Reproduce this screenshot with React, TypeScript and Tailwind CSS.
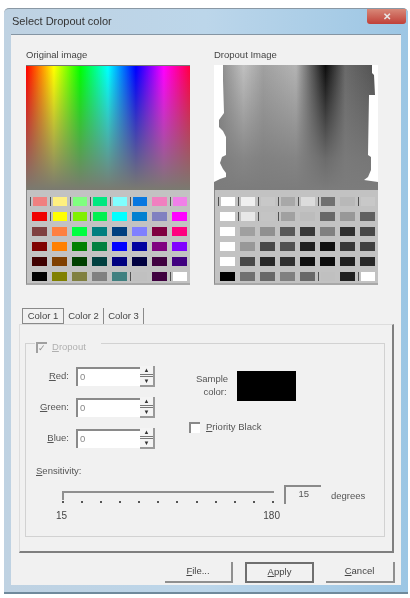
import React from "react";

const left: string[][] = [
  ["#f08080", "#fff080", "#80ff80", "#00e880", "#80ffff", "#0878e0", "#f080c0", "#f080e8"],
  ["#f00000", "#ffff00", "#80f000", "#00f050", "#00ffff", "#0080d0", "#8080c0", "#ff00ff"],
  ["#804040", "#ff8040", "#00ff40", "#008080", "#004080", "#8080ff", "#800040", "#ff0080"],
  ["#800000", "#ff8000", "#008000", "#008040", "#0000ff", "#0000a0", "#800080", "#8000ff"],
  ["#400000", "#804000", "#004000", "#004040", "#000080", "#000040", "#400040", "#400080"],
  ["#000000", "#808000", "#808040", "#808080", "#408080", "#c0c0c0", "#400040", "#ffffff"],
];
const right: string[][] = [
  ["#ffffff", "#f0f0f0", "#c8c8c8", "#a8a8a8", "#dcdcdc", "#707070", "#b8b8b8", "#c8c8c8"],
  ["#ffffff", "#e8e8e8", "#c4c4c4", "#a0a0a0", "#bcbcbc", "#686868", "#989898", "#606060"],
  ["#ffffff", "#a0a0a0", "#909090", "#585858", "#383838", "#808080", "#303030", "#484848"],
  ["#ffffff", "#989898", "#484848", "#505050", "#202020", "#101010", "#383838", "#404040"],
  ["#ffffff", "#484848", "#282828", "#303030", "#101010", "#0c0c0c", "#202020", "#282828"],
  ["#000000", "#707070", "#686868", "#808080", "#686868", "#c0c0c0", "#202020", "#ffffff"],
];

function hasTick(i: number, j: number, c: string) {
  if (i === 0) return j !== 6;
  if (i === 1) return j === 1 || j === 2 || j === 3;
  if (i === 5) return c === "#c0c0c0" || j === 7;
  return false;
}

function Swatches({ rows }: { rows: string[][] }) {
  return (
    <div className="flex flex-col gap-[6px] bg-[#c2c2c2] px-[3px] pt-[7px] h-[95px] border-b-2 border-[#a8a8a8] border-l border-l-[#8a8a8a]">
      {rows.map((r, i) => (
        <div key={i} className="flex justify-between h-[9px]">
          {r.map((c, j) => (
            <div key={j} className="flex w-[17px] h-[9px]">
              <div className={hasTick(i, j, c) ? "w-[1px] bg-[#505050] mr-[2px]" : "w-[1px] mr-[1px]"} />
              <div className="flex-1" style={{ backgroundColor: c }} />
            </div>
          ))}
        </div>
      ))}
    </div>
  );
}

function Spin({ u, rest }: { u: string; rest: string }) {
  return (
    <div className="flex items-center h-[19px]">
      <div className="w-[41px] text-right pr-[7px] text-[#555555]"><u>{u}</u>{rest}</div>
      <div className="w-[64px] h-[19px] bg-white border-l-2 border-t-2 border-[#8a8a8a] pl-[2px] text-[#888888] leading-[15px]">0</div>
      <div className="w-[15px] h-[21px] flex flex-col justify-between bg-[#f4f4f4] border-b-2 border-r-2 border-[#9a9a9a]">
        <div className="h-[9px] border-b border-[#777777] flex items-center justify-center text-[6px] leading-none text-[#333333]">▲</div>
        <div className="h-[9px] border-t border-[#777777] flex items-center justify-center text-[6px] leading-none text-[#333333]">▼</div>
      </div>
    </div>
  );
}

export default function App() {
  return (
    <div className="w-[410px] h-[598px] bg-white pt-[8px] pl-[4px] overflow-hidden font-['Liberation_Sans',sans-serif] text-[9.5px] text-[#444444] blur-[0.5px]">
      <div className="w-[404px] h-[586px] rounded-t-[5px] border-t border-[#8a98a4] bg-[linear-gradient(to_right,#bfd2e2,#bcd6ea_50%,#9cc6e4)] flex flex-col border-b-2 border-b-[#6f8a9c]">
        <div className="h-[25px] flex items-center justify-between pl-[8px] pr-[2px] shrink-0">
          <span className="text-[11px] text-[#333333]">Select Dropout color</span>
          <div className="w-[39px] h-[15px] rounded-b-[3px] bg-[linear-gradient(to_bottom,#d88878,#c04038)] flex items-center justify-center text-[#e8e8e8] text-[10px] font-bold mb-[10px]">✕</div>
        </div>
        <div className="mx-[7px] h-[551px] bg-[#f1f1f1] border-t border-[#8595a3]">
          <div className="flex pl-[15px] pt-[14px] gap-[24px] h-[251px]">
            <div className="w-[164px]">
              <div className="h-[16px] text-[#444444] leading-[12px]">Original image</div>
              <div className="h-[125px] border-t border-[#777777] bg-[linear-gradient(to_bottom,rgba(122,122,112,0)_2%,rgba(122,122,112,0.45)_45%,rgba(122,122,112,1)_100%),linear-gradient(to_right,#ff0000,#ffff00_17%,#00ff00_33%,#00ffff_50%,#0000ff_67%,#ff00ff_84%,#ff0040)]" />
              <Swatches rows={left} />
            </div>
            <div className="w-[164px]">
              <div className="h-[16px] text-[#444444] leading-[12px]">Dropout Image</div>
              <svg width="164" height="125" className="block">
                <defs>
                  <linearGradient id="g" x1="0" x2="1" y1="0" y2="0">
                    <stop offset="0" stopColor="#7a7a7a" />
                    <stop offset="0.18" stopColor="#c0c0c0" />
                    <stop offset="0.3" stopColor="#a0a0a0" />
                    <stop offset="0.5" stopColor="#b4b4b4" />
                    <stop offset="0.68" stopColor="#0c0c0c" />
                    <stop offset="0.8" stopColor="#6a6a6a" />
                    <stop offset="1" stopColor="#505050" />
                  </linearGradient>
                  <linearGradient id="f" x1="0" x2="0" y1="0" y2="1">
                    <stop offset="0" stopColor="#7c7c7c" stopOpacity="0" />
                    <stop offset="0.75" stopColor="#7c7c7c" stopOpacity="0.85" />
                    <stop offset="1" stopColor="#7c7c7c" />
                  </linearGradient>
                </defs>
                <rect width="164" height="125" fill="url(#g)" />
                <rect width="164" height="125" fill="url(#f)" />
                <polygon fill="#ffffff" points="0,0 9,0 9,15 10,48 5,55 5,62 9,66 12,72 12,90 8,92 6,98 9,104 12,108 12,112 6,114 0,117" />
                <polygon fill="#ffffff" points="164,0 158,0 158,8 160,10 161,30 155,30 154,90 157,92 157,105 154,112 150,115 164,117" />
              </svg>
              <Swatches rows={right} />
            </div>
          </div>
          <div className="flex pl-[11px] mt-[22px] h-[16px] items-stretch text-[#444444]">
            <div className="w-[42px] border border-[#8a8a8a] flex items-center justify-center">Color 1</div>
            <div className="w-[40px] border-r border-[#8a8a8a] flex items-center justify-center">Color 2</div>
            <div className="w-[40px] border-r border-[#8a8a8a] flex items-center justify-center">Color 3</div>
          </div>
          <div className="ml-[8px] w-[375px] h-[229px] border-r-2 border-b-2 border-l border-t border-l-[#dddddd] border-t-[#dddddd] border-r-[#7f7f7f] border-b-[#7f7f7f] pl-[5px] pt-[18px]">
            <div className="w-[360px] h-[194px] border border-[#d2d2d2] relative">
              <div className="absolute left-[9px] top-[-4px] bg-[#f1f1f1] flex items-center gap-[5px] px-[1px] text-[#b0b0b0]">
                <div className="w-[11px] h-[11px] border-l-2 border-t-2 border-[#a0a0a0] text-[9px] leading-[9px] text-[#909090]">✓</div>
                <span className="pr-[14px]"><u>D</u>ropout</span>
              </div>
              <div className="flex pt-[23px] pl-[9px]">
                <div className="flex flex-col gap-[12px] w-[154px]">
                  <Spin u="R" rest="ed:" />
                  <Spin u="G" rest="reen:" />
                  <Spin u="B" rest="lue:" />
                </div>
                <div className="w-[180px]">
                  <div className="flex">
                    <div className="w-[46px] pt-[5px] text-center leading-[13px] text-[#555555]">Sample<br /><span className="pl-[6px]">color:</span></div>
                    <div className="w-[59px] h-[30px] bg-black ml-[2px] mt-[4px]" />
                  </div>
                  <div className="flex items-center gap-[6px] mt-[19px] text-[#555555]">
                    <div className="w-[11px] h-[11px] bg-white border-l-2 border-t-2 border-[#8a8a8a]" />
                    <span><u>P</u>riority Black</span>
                  </div>
                </div>
              </div>
              <div className="pl-[10px] mt-[16px] text-[#555555]"><u>S</u>ensitivity:</div>
              <div className="flex pl-[36px] mt-[7px]">
                <div className="w-[212px]">
                  <div className="h-[9px] mt-[6px] border-t-2 border-l-2 border-[#8f8f8f]" />
                  <div className="flex justify-between mt-[1px]">
                    {Array.from({ length: 12 }).map((_, i) => (
                      <div key={i} className="w-[2px] h-[2px] bg-[#555555]" />
                    ))}
                  </div>
                  <div className="flex justify-between mt-[5px] -mx-[6px] text-[10px] text-[#444444]">
                    <span>15</span><span>180</span>
                  </div>
                </div>
                <div className="ml-[10px] w-[37px] h-[19px] border-l-2 border-t-2 border-[#8a8a8a] text-right pr-[12px] text-[#555555] leading-[13px]">15</div>
                <div className="ml-[10px] mt-[4px] text-[#555555]">degrees</div>
              </div>
            </div>
          </div>
          <div className="flex pl-[154px] gap-[12px] mt-[9px] text-[#444444]">
            <div className="w-[68px] h-[21px] border-b-2 border-r-2 border-[#8f8f8f] flex items-center justify-center"><span><u>F</u>ile...</span></div>
            <div className="w-[69px] h-[21px] border-2 border-[#6f6f6f] flex items-center justify-center"><span><u>A</u>pply</span></div>
            <div className="w-[69px] h-[21px] border-b-2 border-r-2 border-[#8f8f8f] flex items-center justify-center"><span><u>C</u>ancel</span></div>
          </div>
        </div>
      </div>
    </div>
  );
}
